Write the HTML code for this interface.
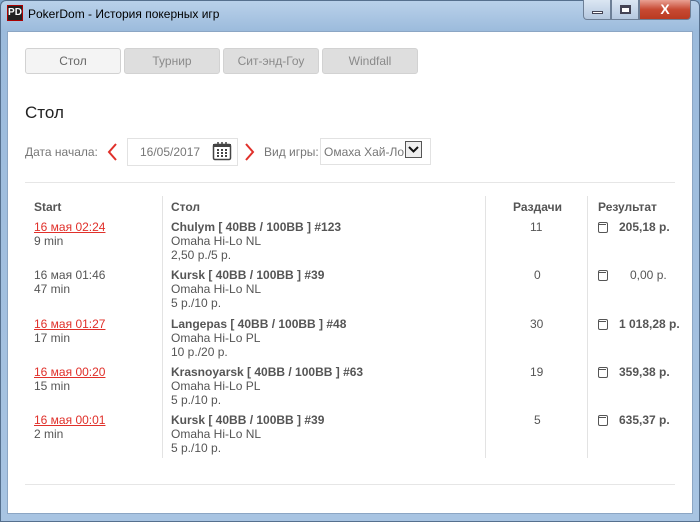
<!DOCTYPE html>
<html><head><meta charset="utf-8"><style>
*{margin:0;padding:0;box-sizing:border-box}
body{width:700px;height:522px;overflow:hidden;position:relative;font-family:"Liberation Sans","Noto Sans CJK SC",sans-serif;background:#7fa6cc}
.frame{position:absolute;left:0;top:0;width:700px;height:522px;background:linear-gradient(#b9d1ea,#9cbbdc 30px,#a8c4e2);border:1px solid #56708e;border-radius:6px 6px 0 0}
.title{position:absolute;left:28px;top:7px;font-size:12px;color:#000}
.logo{position:absolute;left:7px;top:5px;width:16px;height:16px;background:#222;border:1px solid #a00;color:#fff;font-size:10px;font-weight:bold;line-height:14px;text-align:center}
.content{position:absolute;left:7px;top:31px;width:686px;height:483px;background:#fff;border:1px solid #8ca6c4}
.btn{position:absolute;top:0;height:20px;border:1px solid #6d7f96;border-top:none}
.a{position:absolute;font-size:12px;color:#555;white-space:nowrap}
.tab{position:absolute;top:48px;height:26px;width:96px;border-radius:3px;background:#dedede;border:1px solid #d2d2d2;text-align:center;line-height:24px;font-size:12px;color:#8a8a8a}
.b{font-weight:bold}
.r{color:#e0302a;text-decoration:underline}
.vl{position:absolute;top:196px;height:262px;width:1px;background:#e3e3e3}
.hl{position:absolute;left:25px;width:650px;height:1px;background:#e6e6e6}
.w{position:absolute;width:10px;height:11px;border:1px solid #555;border-radius:2px}
.w:after{content:"";position:absolute;left:-1px;top:1px;width:8px;height:1px;background:#555}
</style></head><body>
<div class="frame"></div>
<div class="logo">PD</div>
<div class="title">PokerDom - История покерных игр</div>
<div class="btn" style="left:583px;width:28px;background:linear-gradient(#dbe6f3,#b5c8df);border-radius:0 0 0 4px"><div style="position:absolute;left:8px;top:11px;width:11px;height:3px;background:#fff;border:1px solid #445"></div></div>
<div class="btn" style="left:611px;width:28px;background:linear-gradient(#dbe6f3,#b5c8df)"><div style="position:absolute;left:8px;top:5px;width:11px;height:9px;border:2px solid #445;background:#fff;border-top-width:3px"></div></div>
<div class="btn" style="left:639px;width:52px;background:linear-gradient(#e9a193,#c74a33 50%,#b93a22);border-radius:0 0 4px 0;color:#fff;font-weight:bold;font-size:14px;text-align:center;line-height:18px">X</div>
<div class="content"></div>
<div class="tab" style="left:25px;background:#f4f4f4;color:#666">Стол</div>
<div class="tab" style="left:124px">Турнир</div>
<div class="tab" style="left:223px">Сит-энд-Гоу</div>
<div class="tab" style="left:322px">Windfall</div>
<div class="a" style="left:25px;top:103px;font-size:17px;color:#222">Стол</div>
<div class="a" style="left:25px;top:145px;color:#777">Дата начала:</div>
<svg style="position:absolute;left:106px;top:143px" width="12" height="18"><path d="M10 1L3 9l7 8" stroke="#e0302a" stroke-width="2" fill="none"/></svg>
<div style="position:absolute;left:127px;top:138px;width:111px;height:28px;border:1px solid #e2e2e2"></div>
<div class="a" style="left:140px;top:145px;color:#777">16/05/2017</div>
<svg style="position:absolute;left:212px;top:141px" width="20" height="20"><rect x="1.5" y="3.5" width="17" height="15" rx="1.5" fill="none" stroke="#444" stroke-width="1.5"/><rect x="1" y="3" width="18" height="3" fill="#444"/><path d="M6 1v4M10 1v4M14 1v4" stroke="#444" stroke-width="1.5"/><g fill="#444"><rect x="5" y="8" width="2" height="2"/><rect x="9" y="8" width="2" height="2"/><rect x="13" y="8" width="2" height="2"/><rect x="5" y="11" width="2" height="2"/><rect x="9" y="11" width="2" height="2"/><rect x="13" y="11" width="2" height="2"/><rect x="5" y="14" width="2" height="2"/><rect x="9" y="14" width="2" height="2"/><rect x="13" y="14" width="2" height="2"/></g></svg>
<svg style="position:absolute;left:244px;top:143px" width="12" height="18"><path d="M2 1l7 8-7 8" stroke="#e0302a" stroke-width="2" fill="none"/></svg>
<div class="a" style="left:264px;top:145px;color:#777">Вид игры:</div>
<div style="position:absolute;left:320px;top:138px;width:111px;height:27px;border:1px solid #e2e2e2"></div>
<div class="a" style="left:324px;top:145px;color:#777">Омаха Хай-Ло</div>
<div style="position:absolute;left:405px;top:141px;width:17px;height:17px;border:1px solid #555;background:#eee"><svg width="15" height="15"><path d="M3 5l4.5 4.5L12 5" stroke="#111" stroke-width="2" fill="none"/></svg></div>
<div class="hl" style="top:182px"></div>
<div class="hl" style="top:484px"></div>
<div class="vl" style="left:162px"></div>
<div class="vl" style="left:485px"></div>
<div class="vl" style="left:587px"></div>
<div class="a b" style="left:34px;top:200px">Start</div>
<div class="a b" style="left:171px;top:200px">Стол</div>
<div class="a b" style="left:513px;top:200px">Раздачи</div>
<div class="a b" style="left:598px;top:200px">Результат</div>

<div style="position:absolute;left:0;top:220px;line-height:15px">
<div class="a r" style="left:34px;top:0">16 мая 02:24</div><div class="a" style="left:34px;top:14px">9 min</div>
<div class="a b" style="left:171px;top:0">Chulym [ 40BB / 100BB ] #123</div><div class="a" style="left:171px;top:14px">Omaha Hi-Lo NL</div><div class="a" style="left:171px;top:28px">2,50 р./5 р.</div>
<div class="a" style="left:530px;top:0">11</div><div class="w" style="left:598px;top:2px"></div><div class="a b" style="left:619px;top:0">205,18 р.</div>
</div>
<div style="position:absolute;left:0;top:268px;line-height:15px">
<div class="a" style="left:34px;top:0">16 мая 01:46</div><div class="a" style="left:34px;top:14px">47 min</div>
<div class="a b" style="left:171px;top:0">Kursk [ 40BB / 100BB ] #39</div><div class="a" style="left:171px;top:14px">Omaha Hi-Lo NL</div><div class="a" style="left:171px;top:28px">5 р./10 р.</div>
<div class="a" style="left:534px;top:0">0</div><div class="w" style="left:598px;top:2px"></div><div class="a" style="left:630px;top:0">0,00 р.</div>
</div>
<div style="position:absolute;left:0;top:317px;line-height:15px">
<div class="a r" style="left:34px;top:0">16 мая 01:27</div><div class="a" style="left:34px;top:14px">17 min</div>
<div class="a b" style="left:171px;top:0">Langepas [ 40BB / 100BB ] #48</div><div class="a" style="left:171px;top:14px">Omaha Hi-Lo PL</div><div class="a" style="left:171px;top:28px">10 р./20 р.</div>
<div class="a" style="left:530px;top:0">30</div><div class="w" style="left:598px;top:2px"></div><div class="a b" style="left:619px;top:0">1 018,28 р.</div>
</div>
<div style="position:absolute;left:0;top:365px;line-height:15px">
<div class="a r" style="left:34px;top:0">16 мая 00:20</div><div class="a" style="left:34px;top:14px">15 min</div>
<div class="a b" style="left:171px;top:0">Krasnoyarsk [ 40BB / 100BB ] #63</div><div class="a" style="left:171px;top:14px">Omaha Hi-Lo PL</div><div class="a" style="left:171px;top:28px">5 р./10 р.</div>
<div class="a" style="left:530px;top:0">19</div><div class="w" style="left:598px;top:2px"></div><div class="a b" style="left:619px;top:0">359,38 р.</div>
</div>
<div style="position:absolute;left:0;top:413px;line-height:15px">
<div class="a r" style="left:34px;top:0">16 мая 00:01</div><div class="a" style="left:34px;top:14px">2 min</div>
<div class="a b" style="left:171px;top:0">Kursk [ 40BB / 100BB ] #39</div><div class="a" style="left:171px;top:14px">Omaha Hi-Lo NL</div><div class="a" style="left:171px;top:28px">5 р./10 р.</div>
<div class="a" style="left:534px;top:0">5</div><div class="w" style="left:598px;top:2px"></div><div class="a b" style="left:619px;top:0">635,37 р.</div>
</div>
</body></html>
